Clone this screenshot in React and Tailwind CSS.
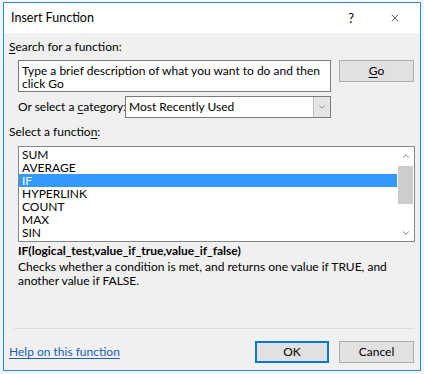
import { ChevronDown, ChevronUp, X } from 'lucide-react'

const FUNCTIONS = ['SUM', 'AVERAGE', 'IF', 'HYPERLINK', 'COUNT', 'MAX', 'SIN']

function Key({ children }) {
  return <span className="underline underline-offset-2">{children}</span>
}

export default function App() {
  return (
    <div
      className="w-[424px] h-[374px] bg-[#f3f6f9] pt-[2px] pl-[3px] text-[12px] text-black"
      style={{ fontFamily: 'Lato, "Noto Sans", sans-serif' }}
    >
      <div className="w-[418px] h-[369px] border border-[#2b8ad8] bg-[#f0f0f0] flex flex-col">
        {/* title bar */}
        <div className="h-[30px] bg-white flex items-center pl-[7px] shrink-0">
          <span className="text-[12.5px] leading-none">Insert Function</span>
          <span className="ml-auto mr-[35px] text-[13px] leading-none">?</span>
          <X className="w-[12px] h-[12px] mr-[19px]" strokeWidth={1.2} />
        </div>

        <div className="flex-1 flex flex-col pl-[5px] pr-[6px] pb-[7px] whitespace-nowrap">
          <div className="h-[27px] flex items-center">
            <span><Key>S</Key>earch for a function:</span>
          </div>

          <div className="flex pl-[9px]">
            <div className="w-[313px] h-[32px] bg-white border border-[#7a7a7a] px-[3px] pt-[3px] leading-[13px] whitespace-normal">
              Type a brief description of what you want to do and then click Go
            </div>
            <button className="ml-auto w-[75px] h-[22px] bg-[#e1e1e1] border border-[#adadad] flex items-center justify-center">
              <span><Key>G</Key>o</span>
            </button>
          </div>

          <div className="mt-[4px] h-[22px] flex items-center pl-[9px]">
            <span className="w-[107px]">Or select a <Key>c</Key>ategory:</span>
            <div className="w-[206px] h-[22px] bg-white border border-[#7a7a7a] flex items-center">
              <span className="pl-[3px] flex-1">Most Recently Used</span>
              <div className="w-[17px] h-full bg-[#e5e5e5] border-l border-[#c0c0c0] flex items-center justify-center">
                <ChevronDown className="w-[10px] h-[10px] text-[#606060]" strokeWidth={1.5} />
              </div>
            </div>
          </div>

          <div className="h-[28px] flex items-center">
            <span>Select a functio<Key>n</Key>:</span>
          </div>

          <div className="ml-[9px] w-[397px] h-[96px] bg-white border border-[#828790] flex">
            <div className="flex-1 flex flex-col pt-[1px] leading-[13px]">
              {FUNCTIONS.map((f) => (
                <div
                  key={f}
                  className={
                    f === 'IF'
                      ? 'h-[13px] pl-[3px] bg-[#3399ff] text-white'
                      : 'h-[13px] pl-[3px]'
                  }
                >
                  {f}
                </div>
              ))}
            </div>
            <div className="w-[17px] flex flex-col items-center">
              <div className="h-[17px] flex items-center justify-center">
                <ChevronUp className="w-[10px] h-[10px] text-[#606060]" strokeWidth={2} />
              </div>
              <div className="w-[15px] h-[38px] mt-[2px] bg-[#cdcdcd]" />
              <div className="mt-auto h-[17px] flex items-center justify-center">
                <ChevronDown className="w-[10px] h-[10px] text-[#606060]" strokeWidth={2} />
              </div>
            </div>
          </div>

          <div className="h-[18px] flex items-center pl-[9px] font-bold">
            IF(logical_test,value_if_true,value_if_false)
          </div>
          <p className="pl-[9px] leading-[14px] w-[390px] whitespace-normal">
            Checks whether a condition is met, and returns one value if TRUE, and another value if FALSE.
          </p>

          <div className="mt-auto ml-[5px] border-t border-[#dcdcdc]" />
          <div className="mt-[12px] flex items-center">
            <a className="text-[#1a5fb4] underline underline-offset-2 cursor-pointer">Help on this function</a>
            <button className="ml-auto w-[74px] h-[22px] bg-[#e1e1e1] border-2 border-[#0078d7]">OK</button>
            <button className="ml-[10px] w-[75px] h-[22px] bg-[#e1e1e1] border border-[#adadad]">Cancel</button>
          </div>
        </div>
      </div>
    </div>
  )
}
